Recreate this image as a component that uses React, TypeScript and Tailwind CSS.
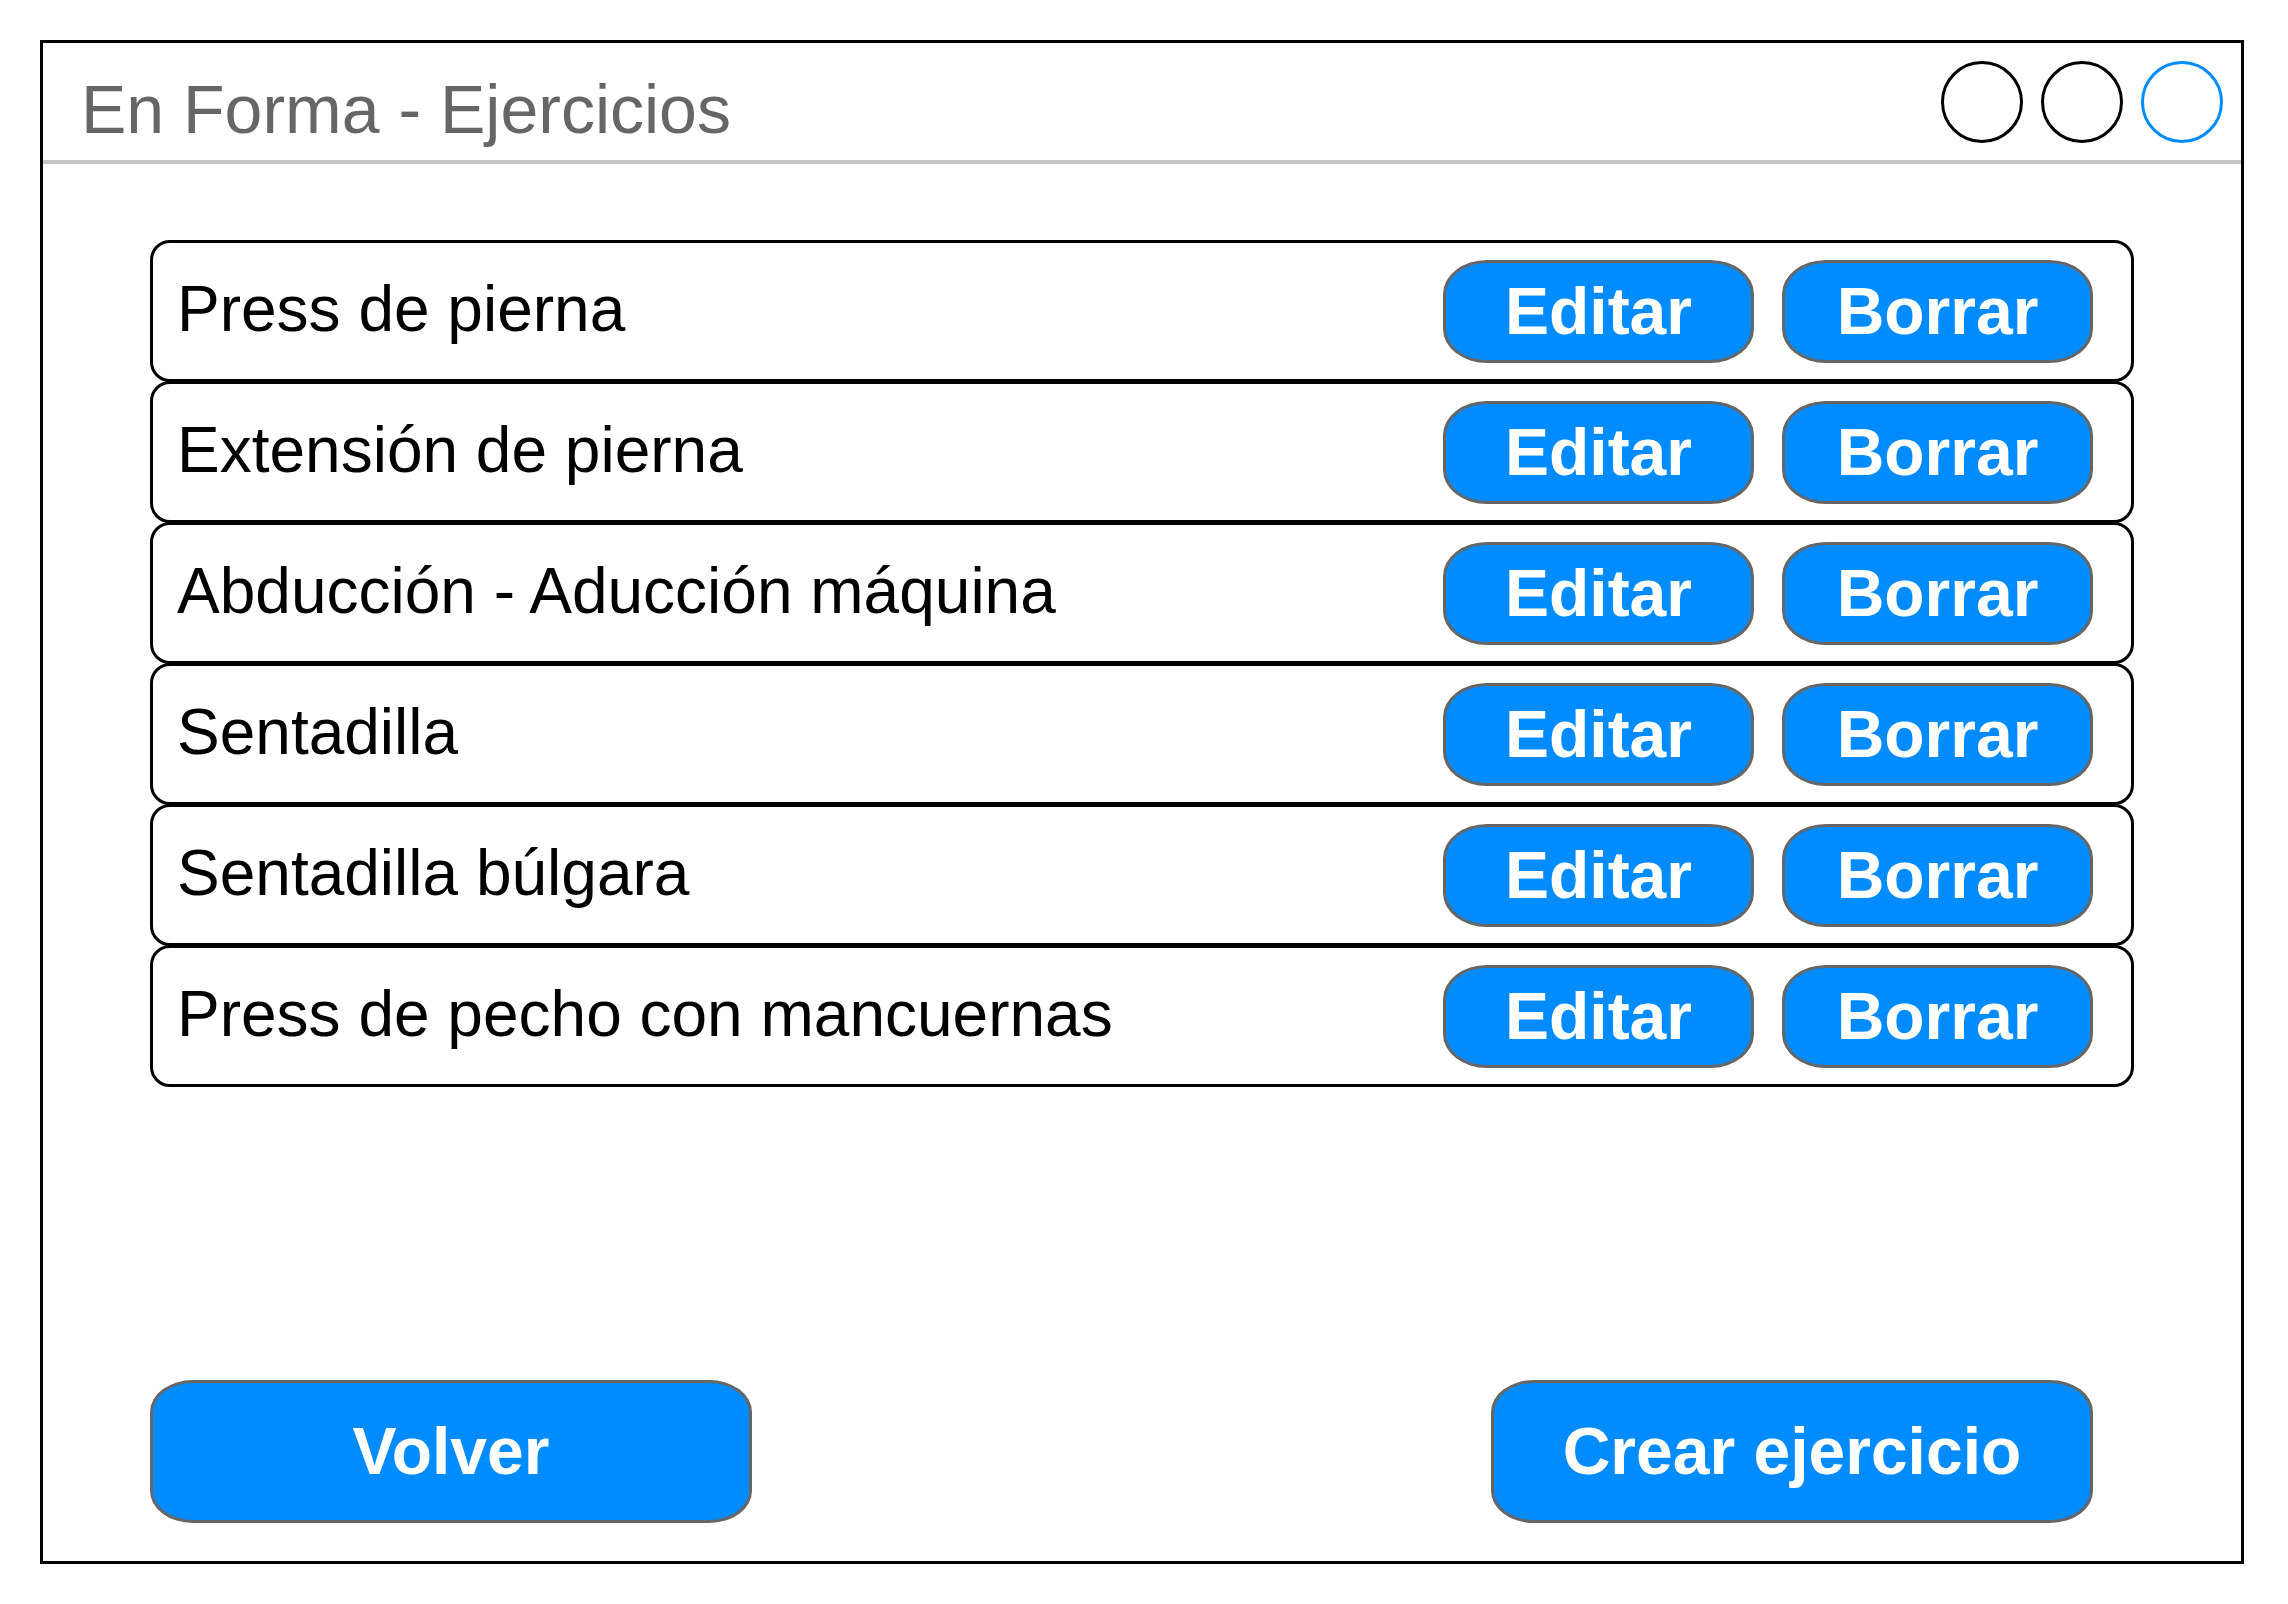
import React from "react";

const rows = [
  "Press de pierna",
  "Extensión de pierna",
  "Abducción - Aducción máquina",
  "Sentadilla",
  "Sentadilla búlgara",
  "Press de pecho con mancuernas",
];

function Btn({ label }: { label: string }) {
  return (
    <div className="w-[311px] h-[103px] shrink-0 border-[3px] border-[#666666] bg-[#008cff] rounded-[44px/34px] flex items-center justify-center">
      <span className="text-white font-bold text-[66px]">{label}</span>
    </div>
  );
}

export default function App() {
  return (
    <div
      className="w-[2288px] h-[1604px] bg-white pt-[40px] pl-[40px]"
      style={{ fontFamily: '"Liberation Sans", Arial, Helvetica, sans-serif' }}
    >
      <div className="w-[2204px] h-[1524px] border-[3px] border-black flex flex-col">
        {/* Title bar */}
        <div className="h-[117px] flex items-center justify-between pl-[38px] pr-[18px] shrink-0">
          <span className="text-[68px] text-[#666666] pt-[14px]">En Forma - Ejercicios</span>
          <div className="flex items-center gap-[18px]">
            <div className="w-[82px] h-[82px] rounded-full border-[3px] border-black" />
            <div className="w-[82px] h-[82px] rounded-full border-[3px] border-black" />
            <div className="w-[82px] h-[82px] rounded-full border-[3px] border-[#008cff]" />
          </div>
        </div>
        <div className="h-[4px] bg-[#c4c4c4] shrink-0" />

        {/* Content */}
        <div className="flex-1 flex flex-col justify-between pt-[76px] px-[107px] pb-[38px]">
          <div className="flex flex-col">
            {rows.map((r, i) => (
              <div
                key={r}
                className={
                  "h-[142px] border-[3px] border-black rounded-[20px] bg-white flex items-center justify-between pl-[24px] pr-[38px] " +
                  (i > 0 ? "-mt-[1px]" : "")
                }
              >
                <span className="text-[64px] text-black pb-[4px]">{r}</span>
                <div className="flex items-center gap-[28px]">
                  <Btn label="Editar" />
                  <Btn label="Borrar" />
                </div>
              </div>
            ))}
          </div>

          <div className="flex items-center justify-between pr-[41px]">
            <div className="w-[602px] h-[143px] border-[3px] border-[#666666] bg-[#008cff] rounded-[43px/32px] flex items-center justify-center">
              <span className="text-white font-bold text-[66px]">Volver</span>
            </div>
            <div className="w-[602px] h-[143px] border-[3px] border-[#666666] bg-[#008cff] rounded-[43px/32px] flex items-center justify-center">
              <span className="text-white font-bold text-[66px]">Crear ejercicio</span>
            </div>
          </div>
        </div>
      </div>
    </div>
  );
}
